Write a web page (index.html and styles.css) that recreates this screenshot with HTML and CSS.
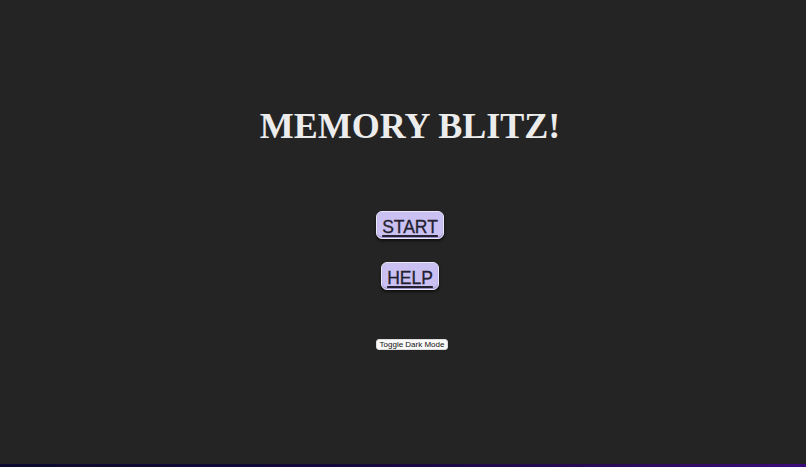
FILE: index.html
```html
<!DOCTYPE html>
<html>
<head>
<meta charset="utf-8">
<link rel="stylesheet" href="styles.css">
</head>
<body>
<div class="page">
  <main class="menu">
    <h1 class="title">MEMORY BLITZ!</h1>
    <a class="btn btn-start" href="#">START</a>
    <a class="btn btn-help" href="#">HELP</a>
    <button class="toggle">Toggle Dark Mode</button>
  </main>
</div>
<div class="strip"></div>
</body>
</html>
```
FILE: styles.css
```css
html, body {
  margin: 0;
  padding: 0;
}
body {
  background: #242424;
  height: 467px;
  overflow: hidden;
  display: flex;
  flex-direction: column;
}
.page {
  flex: 1;
  padding-left: 14px;
}
.menu {
  display: flex;
  flex-direction: column;
  align-items: center;
}
.title {
  font-family: "Liberation Sans", Arial, sans-serif;
  font-family: "Liberation Serif", "Times New Roman", serif;
  font-weight: bold;
  font-size: 36px;
  color: #ececec;
  margin: 106px 0 0 0;
  line-height: 40px;
}
.btn {
  font-family: "Liberation Sans", Arial, sans-serif;
  font-size: 17.5px;
  color: #23212f;
  text-decoration: underline;
  text-decoration-thickness: 2px;
  text-underline-offset: 2px;
  background: #cac0f2;
  border: 1.5px solid #ece8fb;
  border-radius: 6px;
  box-shadow: 0 2px 3px rgba(0,0,0,0.6), inset 0 -1px 1px rgba(80,60,140,0.4);
  line-height: 20px;
  padding: 5px 5px 1px 5px;
  -webkit-text-stroke: 0.3px #23212f;
}
.btn-start {
  margin-top: 65px;
}
.btn-help {
  margin-top: 23px;
}
.toggle {
  margin-top: 49px;
  margin-left: 4px;
  font-family: "Liberation Sans", Arial, sans-serif;
  font-size: 8px;
  line-height: 9px;
  color: #111;
  background: #fafafa;
  border: 1px solid #ddd;
  border-radius: 3px;
  padding: 0 3px;
}
.strip {
  height: 3px;
  background: linear-gradient(90deg, #0c0a2e 0%, #14083a 40%, #2a0a55 75%, #3a0c7a 100%);
}
```
